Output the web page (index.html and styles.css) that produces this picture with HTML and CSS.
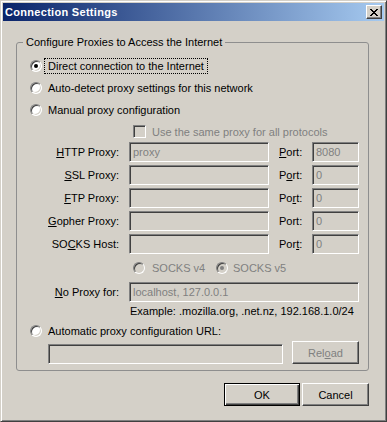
FILE: index.html
```html
<!DOCTYPE html>
<html>
<head>
<meta charset="utf-8">
<link rel="stylesheet" href="styles.css">
</head>
<body>
<div class="window">
  <div class="titlebar">
    <span class="title">Connection Settings</span>
    <span class="close"><svg width="8" height="7" viewBox="0 0 8 7" shape-rendering="crispEdges"><path fill="#000" d="M0 0h2v1H0z M6 0h2v1H6z M1 1h2v1H1z M5 1h2v1H5z M2 2h4v1H2z M3 3h2v1H3z M2 4h4v1H2z M1 5h2v1H1z M5 5h2v1H5z M0 6h2v1H0z M6 6h2v1H6z"/></svg></span>
  </div>
  <div class="content">
    <fieldset class="group">
      <legend class="legend">Configure Proxies to Access the Internet</legend>
      <div class="opt first"><span class="radio checked"></span><span class="lbl focus">Direct connection to the Internet</span></div>
      <div class="opt"><span class="radio"></span><span class="lbl">Auto-detect proxy settings for this network</span></div>
      <div class="opt"><span class="radio"></span><span class="lbl">Manual proxy configuration</span></div>
      <div class="check-row"><span class="check"></span><span class="dis">Use the same proxy for all protocols</span></div>
      <div class="proxy-grid">
        <span class="plabel"><u>H</u>TTP Proxy:</span><span class="field wide">proxy</span><span class="portlabel"><u>P</u>ort:</span><span class="field port">8080</span>
        <span class="plabel"><u>S</u>SL Proxy:</span><span class="field wide"></span><span class="portlabel">P<u>o</u>rt:</span><span class="field port">0</span>
        <span class="plabel"><u>F</u>TP Proxy:</span><span class="field wide"></span><span class="portlabel">Po<u>r</u>t:</span><span class="field port">0</span>
        <span class="plabel"><u>G</u>opher Proxy:</span><span class="field wide"></span><span class="portlabel">Port:</span><span class="field port">0</span>
        <span class="plabel">SO<u>C</u>KS Host:</span><span class="field wide"></span><span class="portlabel">Por<u>t</u>:</span><span class="field port">0</span>
      </div>
      <div class="socks-row">
        <span class="radio disabled v4"></span><span class="dis slbl4">SOCKS v4</span>
        <span class="radio disabled checked v5"></span><span class="dis slbl5">SOCKS v5</span>
      </div>
      <div class="noproxy-row"><span class="plabel np"><u>N</u>o Proxy for:</span><span class="field long">localhost, 127.0.0.1</span></div>
      <div class="example">Example: .mozilla.org, .net.nz, 192.168.1.0/24</div>
      <div class="opt auto"><span class="radio"></span><span class="lbl">Automatic proxy configuration URL:</span></div>
      <div class="url-row"><span class="field url"></span><span class="btn reload">Rel<u>o</u>ad</span></div>
    </fieldset>
    <div class="buttons">
      <span class="btn default ok">OK</span>
      <span class="btn cancel">Cancel</span>
    </div>
  </div>
</div>
</body>
</html>
```
FILE: styles.css
```css
html, body {
  margin: 0;
  padding: 0;
  background: #d4d0c8;
}
body {
  font-family: "Liberation Sans", Arial, sans-serif;
  font-size: 11px;
  color: #000;
}
.window {
  width: 387px;
  height: 422px;
  box-sizing: border-box;
  background: #d4d0c8;
  border: 1px solid;
  border-color: #d4d0c8 #404040 #404040 #d4d0c8;
  box-shadow: inset 1px 1px 0 #fff, inset -1px -1px 0 #808080;
  padding: 2px;
}
.titlebar {
  height: 18px;
  display: flex;
  align-items: center;
  background: linear-gradient(to right, #0a246a, #a6caf0);
}
.title {
  color: #fff;
  font-weight: bold;
  font-size: 11px;
  letter-spacing: 0.3px;
  padding-left: 2px;
}
.close {
  margin-left: auto;
  margin-right: 2px;
  width: 16px;
  height: 14px;
  box-sizing: border-box;
  background: #d4d0c8;
  border: 1px solid;
  border-color: #fff #404040 #404040 #fff;
  box-shadow: inset -1px -1px 0 #808080;
  display: flex;
  align-items: center;
  justify-content: center;
}
.close svg { display: block; }
.content {
  padding: 15px 15px 0 13px;
}
.group {
  margin: 0;
  padding: 5px 0 6px 0;
  border: 1px solid #8e8e8e;
  border-radius: 3px;
  min-width: 0;
}
.legend {
  padding: 0 3px;
  margin-left: 6px;
  line-height: 13px;
}
.opt {
  display: flex;
  align-items: center;
  height: 22px;
}
.opt.first { height: 23px; }
.opt.auto { height: 19px; }
.radio {
  position: relative;
  flex: none;
  width: 12px;
  height: 12px;
  margin-left: 13px;
  margin-right: 2px;
  box-sizing: border-box;
  border-radius: 50%;
  border: 1px solid;
  border-color: #808080 #fff #fff #808080;
  box-shadow: inset 1px 1px 0 #404040, inset -1px -1px 0 #d4d0c8;
  background: #fff;
}
.radio.checked::after {
  content: "";
  position: absolute;
  left: 3px;
  top: 3px;
  width: 4px;
  height: 4px;
  border-radius: 50%;
  background: #000;
}
.radio.disabled { background: #d4d0c8; }
.radio.disabled.checked::after { background: #808080; }
.lbl {
  padding: 0 3px;
  line-height: 14px;
  border: 1px dotted transparent;
}
.lbl.focus { border-color: #000; }
.check-row {
  display: flex;
  align-items: center;
  height: 21px;
}
.check {
  flex: none;
  width: 13px;
  height: 13px;
  box-sizing: border-box;
  margin-left: 116px;
  margin-right: 6px;
  border: 1px solid;
  border-color: #808080 #fff #fff #808080;
  box-shadow: inset 1px 1px 0 #404040, inset -1px -1px 0 #d4d0c8;
  background: #d4d0c8;
}
.dis { color: #808080; }
.proxy-grid {
  display: grid;
  grid-template-columns: 112px 150px 33px 47px;
  grid-auto-rows: 20px;
  row-gap: 3px;
  align-items: center;
}
.plabel {
  text-align: right;
  padding-right: 10px;
}
.portlabel { text-align: left; }
.field {
  display: block;
  height: 20px;
  box-sizing: border-box;
  border: 1px solid;
  border-color: #808080 #fff #fff #808080;
  box-shadow: inset 1px 1px 0 #404040, inset -1px -1px 0 #d4d0c8;
  background: #d4d0c8;
  color: #808080;
  padding: 0 3px;
  line-height: 18px;
  white-space: nowrap;
  overflow: hidden;
}
.field.wide { width: 140px; }
.field.port { width: 47px; }
.field.long { width: 230px; }
.field.url { width: 235px; }
.socks-row {
  display: flex;
  align-items: center;
  height: 28px;
}
.radio.v4 { margin-left: 116px; margin-right: 7px; }
.slbl4 { width: 64px; }
.radio.v5 { margin-left: 0; margin-right: 5px; }
.noproxy-row {
  display: flex;
  align-items: center;
  height: 20px;
}
.plabel.np { width: 112px; box-sizing: border-box; }
.example {
  height: 19px;
  line-height: 19px;
  padding-left: 113px;
}
.url-row {
  display: flex;
  align-items: flex-end;
  margin-top: 1px;
  padding-left: 31px;
}
.btn {
  display: flex;
  align-items: center;
  justify-content: center;
  height: 23px;
  box-sizing: border-box;
  border: 1px solid;
  border-color: #fff #404040 #404040 #fff;
  box-shadow: inset -1px -1px 0 #808080;
  background: #d4d0c8;
}
.btn.reload {
  width: 67px;
  margin-left: 9px;
  color: #808080;
}
.buttons {
  display: flex;
  justify-content: flex-end;
  gap: 2px;
  margin-top: 12px;
}
.btn.ok { width: 76px; }
.btn.cancel { width: 67px; }
.btn.default {
  border: 1px solid #000;
  box-shadow: inset 1px 1px 0 #fff, inset -1px -1px 0 #404040, inset -2px -2px 0 #808080;
}
```
